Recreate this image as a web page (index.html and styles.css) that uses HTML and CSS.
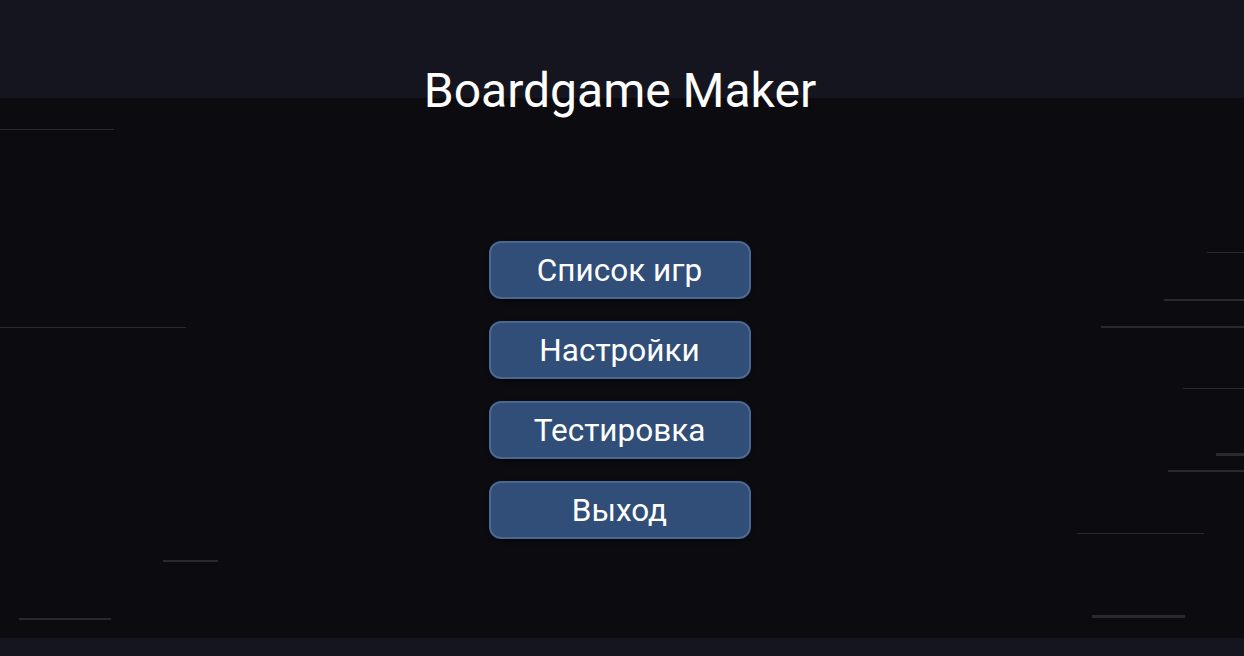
FILE: index.html
```html
<!DOCTYPE html>
<html lang="ru">
<head>
<meta charset="utf-8">
<title>Boardgame Maker</title>
<link rel="stylesheet" href="styles.css">
</head>
<body>
<div class="app">
  <header class="top">
    <h1 class="title">Boardgame Maker</h1>
  </header>
  <main class="stage">
    <div class="streaks">
      <span class="streak" style="left:0;top:31px;width:114px;height:1px"></span>
      <span class="streak" style="left:0;top:229px;width:186px;height:1px"></span>
      <span class="streak" style="left:163px;top:462px;width:55px;height:2px"></span>
      <span class="streak" style="left:19px;top:520px;width:92px;height:2px"></span>
      <span class="streak" style="left:1207px;top:154px;width:37px;height:1px"></span>
      <span class="streak" style="left:1164px;top:201px;width:80px;height:2px"></span>
      <span class="streak" style="left:1101px;top:228px;width:143px;height:2px"></span>
      <span class="streak" style="left:1183px;top:290px;width:61px;height:1px"></span>
      <span class="streak" style="left:1216px;top:355px;width:28px;height:3px"></span>
      <span class="streak" style="left:1168px;top:372px;width:76px;height:2px"></span>
      <span class="streak" style="left:1077px;top:435px;width:127px;height:1px"></span>
      <span class="streak" style="left:1092px;top:517px;width:93px;height:3px"></span>
    </div>
    <nav class="menu">
      <button class="menu-btn">Список игр</button>
      <button class="menu-btn">Настройки</button>
      <button class="menu-btn">Тестировка</button>
      <button class="menu-btn">Выход</button>
    </nav>
  </main>
  <footer class="bottom"></footer>
</div>
</body>
</html>
```

FILE: styles.css
```css
* { box-sizing: border-box; }
html, body { margin: 0; padding: 0; }
body {
  background: #0c0c10;
  font-family: Roboto, "Noto Sans", sans-serif;
  color: #ffffff;
  overflow: hidden;
}
.app {
  width: 1244px;
  height: 656px;
  display: flex;
  flex-direction: column;
}
.top {
  height: 98px;
  flex: 0 0 98px;
  background: #15151f;
  position: relative;
  z-index: 2;
  padding: 62px 4px 0 0;
}
.title {
  margin: 0;
  font-weight: 400;
  font-size: 48px;
  line-height: 1.2;
  text-align: center;
  color: #ffffff;
}
.stage {
  flex: 1 1 auto;
  position: relative;
  background: #0c0c10;
  display: flex;
  justify-content: center;
  padding: 143px 5px 0 0;
}
.streaks {
  position: absolute;
  inset: 0;
  pointer-events: none;
}
.streak {
  position: absolute;
  background: #29292f;
}
.menu {
  position: relative;
  display: flex;
  flex-direction: column;
  gap: 22px;
  align-items: center;
}
.menu-btn {
  width: 262px;
  height: 58px;
  border: 2px solid #4b6893;
  border-radius: 12px;
  background: #304e77;
  color: #ffffff;
  font-family: Roboto, "Noto Sans", sans-serif;
  font-size: 31.5px;
  padding: 0;
  box-shadow: 0 2px 4px rgba(0,0,0,0.45);
  cursor: pointer;
}
.bottom {
  height: 18px;
  flex: 0 0 18px;
  background: #15151f;
}
```
